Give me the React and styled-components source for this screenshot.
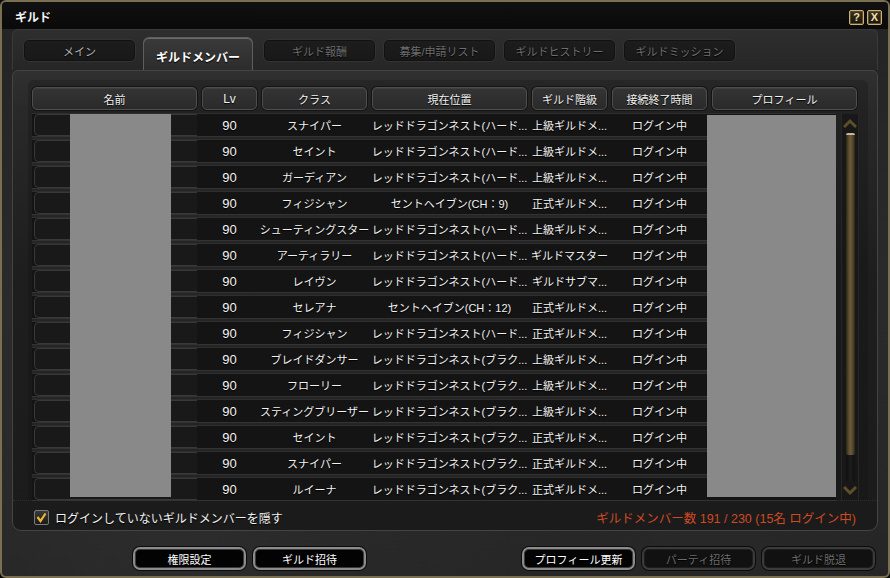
import React from 'react';
import styled, { createGlobalStyle } from 'styled-components';

const Global = createGlobalStyle`
  html, body { margin: 0; padding: 0; background: #0b0b0b; }
  body { font-family: "Liberation Sans", "Noto Sans CJK JP", sans-serif; }
  * { box-sizing: border-box; }
`;

const Window = styled.div`
  position: relative;
  width: 890px;
  height: 578px;
  border: 2px solid #7a6f50;
  border-radius: 6px;
  overflow: hidden;
  display: flex;
  flex-direction: column;
  background:
    radial-gradient(ellipse at 20% 95%, rgba(60,60,60,0.35), transparent 40%),
    radial-gradient(ellipse at 80% 92%, rgba(50,50,50,0.3), transparent 40%),
    linear-gradient(180deg, #242424 0%, #2a2a2a 50%, #232323 100%);
`;

const TitleBar = styled.div`
  height: 27px;
  flex: none;
  display: flex;
  align-items: center;
  padding: 0 6px 0 13px;
  background: linear-gradient(180deg, #101010, #0a0a0a);
`;

const Title = styled.div`
  color: #f4f4f4;
  font-size: 12px;
  font-weight: 700;
  text-shadow: 0 1px 1px #000;
  margin-top: 1px;
`;

const TitleButtons = styled.div`
  margin-left: auto;
  display: flex;
  gap: 3px;
  margin-top: 3px;
`;

const WinButton = styled.div`
  width: 15px;
  height: 15px;
  border: 1px solid #cbb277;
  border-radius: 2px;
  background: linear-gradient(180deg, #3c3322, #1a150c);
  color: #f0dfa8;
  font-weight: 700;
  font-size: 11px;
  line-height: 13px;
  text-align: center;
  box-shadow: inset 0 0 0 1px #5b4a28;
`;

const TabStrip = styled.div`
  height: 41px;
  flex: none;
  margin: 0 10px;
  padding: 9px 0 0 10px;
  display: flex;
  align-items: flex-start;
  gap: 7px;
  border: 1px solid #3a3a3a;
  border-bottom: none;
  border-radius: 6px 6px 0 0;
  background: linear-gradient(180deg, #2e2e2e, #262626);
`;

const Tab = styled.div`
  width: ${p => (p.$active ? 110 : 113)}px;
  height: ${p => (p.$active ? 34 : 23)}px;
  margin-top: ${p => (p.$active ? -2 : 0)}px;
  margin-right: ${p => (p.$active ? 3 : 0)}px;
  display: flex;
  align-items: center;
  justify-content: center;
  padding-top: ${p => (p.$active ? 4 : 0)}px;
  font-size: ${p => (p.$active ? 12 : 11)}px;
  font-weight: ${p => (p.$active ? 700 : 400)};
  color: ${p => (p.$active ? '#ffffff' : p.$dim ? '#6e6e6e' : '#b4b4b4')};
  border-radius: 6px 6px ${p => (p.$active ? '0 0' : '6px 6px')};
  border: 1px solid ${p => (p.$active ? '#5e5e5e' : '#333')};
  border-bottom: ${p => (p.$active ? 'none' : '1px solid #333')};
  background: ${p =>
    p.$active
      ? 'linear-gradient(180deg, #3a3a3a, #2c2c2c)'
      : 'linear-gradient(180deg, #1d1d1d, #181818)'};
  box-shadow: ${p => (p.$active ? 'inset 0 1px 0 #6a6a6a' : 'inset 0 0 0 1px #111')};
  text-shadow: 0 1px 1px #000;
`;

const ContentPanel = styled.div`
  height: 461px;
  flex: none;
  margin: 0 10px;
  padding: 9px 0 0 15px;
  border: 1px solid #444;
  border-radius: 6px 6px 9px 9px;
  background: linear-gradient(180deg, #303030 0px, #292929 40px, #1e1e1e 200px, #1b1b1b 100%);
  display: flex;
  flex-direction: column;
`;

const ListArea = styled.div`
  width: 840px;
  padding: 7px 0 0 4px;
  border-radius: 6px 6px 0 0;
  background: linear-gradient(180deg, rgba(0,0,0,0.18), rgba(0,0,0,0.12));
`;

const cols = '165px 55px 105px 155px 75px 95px 145px';

const HeaderRow = styled.div`
  display: grid;
  grid-template-columns: ${cols};
  column-gap: 5px;
  height: 23px;
`;

const HeaderCell = styled.div`
  display: flex;
  align-items: center;
  justify-content: center;
  font-size: ${p => (p.$latin ? 12 : 11)}px;
  color: #f2f2f2;
  border: 1px solid #4e4e4e;
  border-radius: 5px;
  background: linear-gradient(180deg, #343434 0%, #2a2a2a 100%);
  box-shadow: inset 0 1px 0 #3e3e3e, 0 0 0 1px #141414;
  text-shadow: 0 1px 1px #000;
`;

const Body = styled.div`
  position: relative;
  margin-top: 4px;
  height: 386px;
  display: flex;
  gap: 5px;
`;

const Rows = styled.div`
  width: 804px;
  display: flex;
  flex-direction: column;
  gap: 4px;
  background: linear-gradient(180deg, #262626, #242424);
`;

const Row = styled.div`
  display: grid;
  grid-template-columns: 165px 55px 105px 155px 75px 95px 1fr;
  column-gap: 5px;
  height: 22px;
  flex: none;
  background: #141414;
  box-shadow: 0 1px 0 #333, 0 -1px 0 #2e2e2e;
`;

const NameBox = styled.div`
  margin-left: 2px;
  border: 1px solid #383838;
  border-right: none;
  border-radius: 5px 0 0 5px;
  background: #191919;
`;

const Cell = styled.div`
  display: flex;
  align-items: center;
  justify-content: center;
  white-space: nowrap;
  font-size: ${p => (p.$num ? 13 : 11)}px;
  color: #f3f3f3;
  text-shadow: 0 1px 1px #000;
`;

const Mask = styled.div`
  position: absolute;
  top: ${p => p.$top}px;
  left: ${p => p.$left}px;
  width: ${p => p.$w}px;
  bottom: 3px;
  background: #898989;
`;

const Scrollbar = styled.div`
  width: 18px;
  display: flex;
  flex-direction: column;
  align-items: center;
  background: #181818;
  border-left: 1px solid #262626;
  border-right: 1px solid #262626;
`;

const ArrowWrap = styled.div`
  height: 19px;
  flex: none;
  display: flex;
  align-items: center;
  justify-content: center;
`;

const Thumb = styled.div`
  width: 9px;
  height: 322px;
  flex: none;
  border-radius: 2px;
  border-top: 2px solid #c7b993;
  background: linear-gradient(90deg, #2c2616 0%, #5a4c2f 30%, #6a5a38 50%, #5a4c2f 70%, #2c2616 100%);
`;

const Track = styled.div`
  flex: 1;
  width: 9px;
  background: linear-gradient(90deg, #0f0f0f, #1c1c1c, #0f0f0f);
`;

const Footer = styled.div`
  margin-left: -15px;
  padding: 4px 21px 0 21px;
  display: flex;
  align-items: center;
  height: 24px;
  box-sizing: content-box;
  width: 822px;
  border-top: 1px dotted #2e2e2e;
`;

const Check = styled.div`
  width: 15px;
  height: 15px;
  border: 1px solid #7a7a7a;
  border-radius: 2px;
  background: linear-gradient(180deg, #3a3a3a, #1a1a1a);
  display: flex;
  align-items: center;
  justify-content: center;
  margin-right: 6px;
`;

const CheckLabel = styled.div`
  font-size: 12px;
  color: #f3f3f3;
  text-shadow: 0 1px 1px #000;
`;

const Count = styled.div`
  margin-left: auto;
  font-size: 12.5px;
  color: #cf4a22;
  white-space: nowrap;
`;

const ButtonBar = styled.div`
  margin-top: 16px;
  height: 23px;
  flex: none;
  display: flex;
  padding: 0 13px 0 131px;
  gap: 7px;
`;

const Spacer = styled.div`
  flex: 1;
`;

const Button = styled.div`
  width: 113px;
  height: 23px;
  display: flex;
  align-items: center;
  justify-content: center;
  font-size: 11px;
  color: ${p => (p.$disabled ? '#6c6c6c' : '#ffffff')};
  border-radius: 7px;
  border: 2px solid ${p => (p.$disabled ? '#3b3b3b' : '#8c8c8c')};
  background: ${p => (p.$disabled ? '#111' : '#030303')};
  box-shadow: inset 0 0 0 1px ${p => (p.$disabled ? '#1d1d1d' : '#3a3a3a')}, 0 0 0 1px #0c0c0c;
  text-shadow: 0 1px 1px #000;
`;

const Chevron = ({ up }) => (
  <svg width="14" height="11" viewBox="0 0 14 11">
    <path
      d={up ? 'M1 9 L7 3 L13 9' : 'M1 2 L7 8 L13 2'}
      fill="none"
      stroke="#5e4f2c"
      strokeWidth="3"
    />
  </svg>
);

const HARD = 'レッドドラゴンネスト(ハード...';
const BURA = 'レッドドラゴンネスト(ブラク...';
const JO = '上級ギルドメ...';
const SEI = '正式ギルドメ...';

const rows = [
  ['スナイパー', HARD, JO],
  ['セイント', HARD, JO],
  ['ガーディアン', HARD, JO],
  ['フィジシャン', 'セントヘイブン(CH：9)', SEI],
  ['シューティングスター', HARD, JO],
  ['アーティラリー', HARD, 'ギルドマスター'],
  ['レイヴン', HARD, 'ギルドサブマ...'],
  ['セレアナ', 'セントヘイブン(CH：12)', SEI],
  ['フィジシャン', HARD, SEI],
  ['ブレイドダンサー', BURA, JO],
  ['フローリー', BURA, JO],
  ['スティングブリーザー', BURA, JO],
  ['セイント', BURA, SEI],
  ['スナイパー', BURA, SEI],
  ['ルイーナ', BURA, SEI],
];

const headers = ['名前', 'Lv', 'クラス', '現在位置', 'ギルド階級', '接続終了時間', 'プロフィール'];

export default function App() {
  return (
    <>
      <Global />
      <Window>
        <TitleBar>
          <Title>ギルド</Title>
          <TitleButtons>
            <WinButton>?</WinButton>
            <WinButton>X</WinButton>
          </TitleButtons>
        </TitleBar>
        <TabStrip>
          <Tab>メイン</Tab>
          <Tab $active>ギルドメンバー</Tab>
          <Tab $dim>ギルド報酬</Tab>
          <Tab $dim>募集/申請リスト</Tab>
          <Tab $dim>ギルドヒストリー</Tab>
          <Tab $dim>ギルドミッション</Tab>
        </TabStrip>
        <ContentPanel>
          <ListArea>
            <HeaderRow>
              {headers.map(h => (
                <HeaderCell key={h} $latin={h === 'Lv'}>{h}</HeaderCell>
              ))}
            </HeaderRow>
            <Body>
              <Rows>
                {rows.map((r, i) => (
                  <Row key={i}>
                    <NameBox />
                    <Cell $num>90</Cell>
                    <Cell>{r[0]}</Cell>
                    <Cell>{r[1]}</Cell>
                    <Cell>{r[2]}</Cell>
                    <Cell>ログイン中</Cell>
                    <div />
                  </Row>
                ))}
              </Rows>
              <Scrollbar>
                <ArrowWrap><Chevron up /></ArrowWrap>
                <Thumb />
                <Track />
                <ArrowWrap><Chevron /></ArrowWrap>
              </Scrollbar>
              <Mask $top={0} $left={38} $w={101} />
              <Mask $top={1} $left={675} $w={129} />
            </Body>
          </ListArea>
          <Footer>
            <Check>
              <svg width="11" height="11" viewBox="0 0 11 11">
                <path d="M1.5 5 L4.5 9 L9.5 1.5" fill="none" stroke="#f0b830" strokeWidth="2.2" />
              </svg>
            </Check>
            <CheckLabel>ログインしていないギルドメンバーを隠す</CheckLabel>
            <Count>ギルドメンバー数 191 / 230 (15名 ログイン中)</Count>
          </Footer>
        </ContentPanel>
        <ButtonBar>
          <Button>権限設定</Button>
          <Button>ギルド招待</Button>
          <Spacer />
          <Button>プロフィール更新</Button>
          <Button $disabled>パーティ招待</Button>
          <Button $disabled>ギルド脱退</Button>
        </ButtonBar>
      </Window>
    </>
  );
}
